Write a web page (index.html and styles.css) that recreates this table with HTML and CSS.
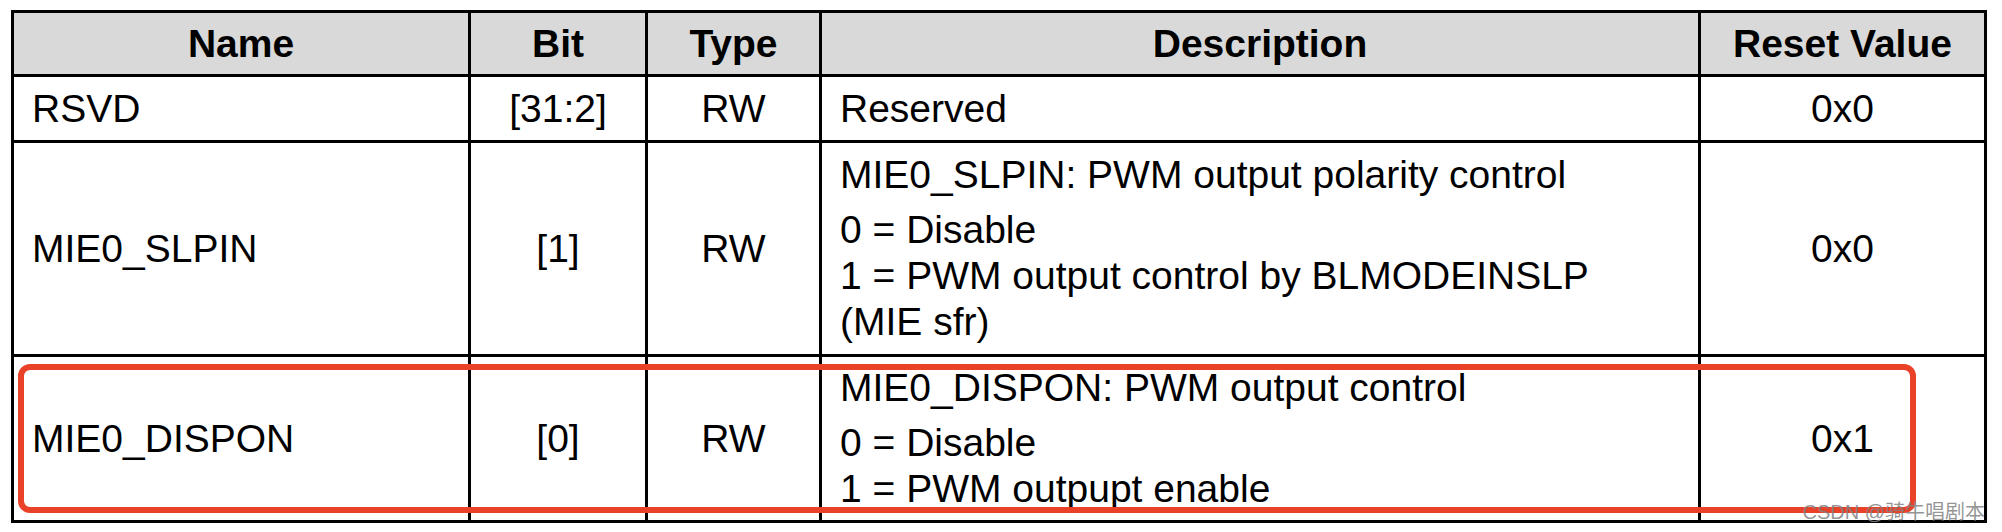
FILE: index.html
```html
<!DOCTYPE html>
<html lang="en">
<head>
<meta charset="utf-8">
<title>Register table</title>
<link rel="stylesheet" href="styles.css">
</head>
<body>
<div class="page">
  <div class="sheet">
    <div class="reg-table" role="table">
      <div class="cell head" role="columnheader">Name</div>
      <div class="cell head" role="columnheader">Bit</div>
      <div class="cell head" role="columnheader">Type</div>
      <div class="cell head" role="columnheader">Description</div>
      <div class="cell head" role="columnheader">Reset Value</div>

      <div class="cell" role="cell">RSVD</div>
      <div class="cell center" role="cell">[31:2]</div>
      <div class="cell center" role="cell">RW</div>
      <div class="cell" role="cell">Reserved</div>
      <div class="cell center" role="cell">0x0</div>

      <div class="cell" role="cell">MIE0_SLPIN</div>
      <div class="cell center" role="cell">[1]</div>
      <div class="cell center" role="cell">RW</div>
      <div class="cell desc" role="cell">
        <p class="title">MIE0_SLPIN: PWM output polarity control</p>
        <p>0 = Disable</p>
        <p>1 = PWM output control by BLMODEINSLP</p>
        <p>(MIE sfr)</p>
      </div>
      <div class="cell center" role="cell">0x0</div>

      <div class="cell" role="cell">MIE0_DISPON</div>
      <div class="cell center" role="cell">[0]</div>
      <div class="cell center" role="cell">RW</div>
      <div class="cell desc" role="cell">
        <p class="title">MIE0_DISPON: PWM output control</p>
        <p>0 = Disable</p>
        <p>1 = PWM outpupt enable</p>
      </div>
      <div class="cell center" role="cell">0x1</div>
    </div>
    <div class="highlight"></div>
    <div class="watermark">CSDN @骑牛唱剧本</div>
  </div>
</div>
</body>
</html>
```

FILE: styles.css
```css
html, body {
  margin: 0;
  background: #ffffff;
}

body {
  font-family: "Liberation Sans", Arial, "Noto Sans CJK SC", sans-serif;
  color: #000000;
}

.page {
  padding: 10px 0 0 11px;
}

.sheet {
  position: relative;
  width: 1976px;
}

.reg-table {
  display: grid;
  grid-template-columns: 454px 174px 171px 876px 283px;
  grid-template-rows: 61px 63px 211px 163px;
  gap: 3px;
  padding: 3px;
  background: #000000;
}

.cell {
  background: #ffffff;
  display: flex;
  align-items: center;
  padding: 0 18px;
  font-size: 39px;
  line-height: 46px;
  white-space: nowrap;
}

.center {
  justify-content: center;
}

.head {
  background: #d9d9d9;
  font-weight: bold;
  justify-content: center;
}

.desc {
  flex-direction: column;
  align-items: flex-start;
  justify-content: center;
}

.desc p {
  margin: 0;
}

.desc .title {
  margin-bottom: 9px;
}

.highlight {
  position: absolute;
  left: 7px;
  top: 354px;
  width: 1898px;
  height: 149px;
  box-sizing: border-box;
  border: 6px solid #ea4129;
  border-radius: 12px;
  pointer-events: none;
}

.watermark {
  position: absolute;
  right: 2px;
  bottom: 1px;
  font-family: "Liberation Sans", Arial, "Noto Sans CJK SC", sans-serif;
  font-size: 20px;
  line-height: 1;
  color: rgba(130, 130, 130, 0.85);
  white-space: nowrap;
}
```
